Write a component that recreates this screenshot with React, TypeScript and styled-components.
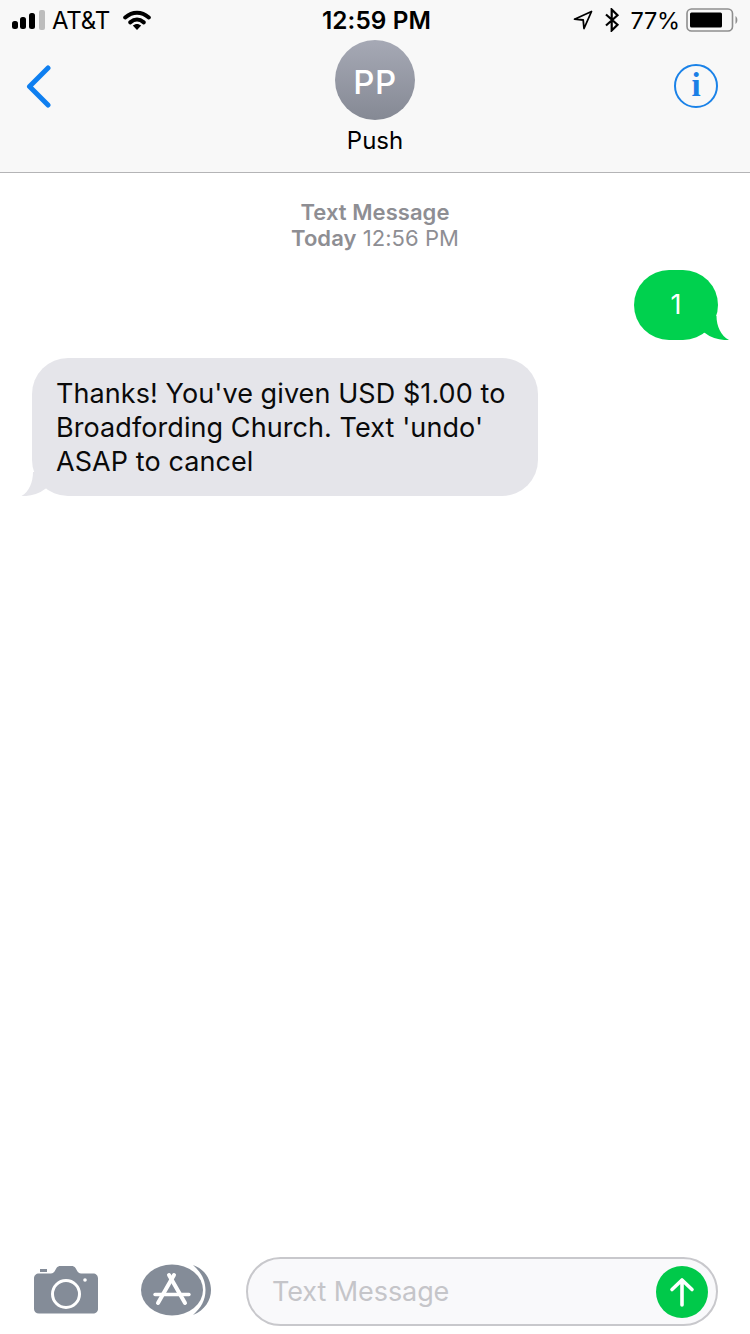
import styled, { createGlobalStyle } from "styled-components";

const GlobalStyle = createGlobalStyle`
    html, body {
        margin: 0;
        padding: 0;
        background: #ffffff;
    }
`;

const Page = styled.div`
    width: 750px;
    height: 1334px;
    display: flex;
    flex-direction: column;
    overflow: hidden;
    background: #ffffff;
    font-family: Inter, "Liberation Sans", sans-serif;
    color: #000000;
`;

const Header = styled.header`
    height: 173px;
    box-sizing: border-box;
    background: #f8f8f8;
    border-bottom: 1px solid #b4b4b6;
    flex: none;
`;

const StatusBar = styled.div`
    height: 40px;
    display: grid;
    grid-template-columns: 1fr auto 1fr;
    align-items: center;
    padding: 0 12px;
`;

const StatusLeft = styled.div`
    display: flex;
    align-items: center;
`;

const Carrier = styled.span`
    font-size: 24px;
    margin-left: 7px;
    margin-right: 13px;
    letter-spacing: -0.2px;
`;

const Clock = styled.span`
    font-size: 24.3px;
    font-weight: 600;
    letter-spacing: 0.1px;
    padding-left: 3px;
`;

const StatusRight = styled.div`
    display: flex;
    align-items: center;
    justify-content: flex-end;
`;

const Battery = styled.span`
    font-size: 23.5px;
    margin: 0 6px 0 10px;
    letter-spacing: -0.2px;
`;

const NavRow = styled.div`
    display: grid;
    grid-template-columns: 1fr auto 1fr;
    align-items: start;
    padding: 0 26px;
`;

const BackButton = styled.div`
    padding-top: 25px;
    display: flex;
`;

const Contact = styled.div`
    display: flex;
    flex-direction: column;
    align-items: center;
`;

const Avatar = styled.div`
    width: 80px;
    height: 80px;
    box-sizing: border-box;
    padding-top: 3px;
    border-radius: 50%;
    background: linear-gradient(#a6a9b5, #858994);
    color: #ffffff;
    font-size: 33px;
    font-weight: 500;
    letter-spacing: 0.5px;
    display: flex;
    align-items: center;
    justify-content: center;
`;

const ContactName = styled.div`
    font-size: 24px;
    line-height: 30px;
    margin-top: 6px;
`;

const InfoWrap = styled.div`
    display: flex;
    justify-content: flex-end;
    padding: 24px 6px 0 0;
`;

const InfoButton = styled.div`
    width: 44px;
    height: 44px;
    box-sizing: border-box;
    border: 2px solid #1a82e8;
    border-radius: 50%;
    color: #1a7fe6;
    font-family: "Liberation Serif", serif;
    font-weight: 700;
    font-size: 33px;
    line-height: 39px;
    text-align: center;
`;

const Thread = styled.main`
    flex: 1;
    display: flex;
    flex-direction: column;
    padding-top: 26px;
`;

const Stamp = styled.div`
    text-align: center;
    font-size: 22px;
    line-height: 26px;
    letter-spacing: 0.05px;
    color: #8e8e93;
`;

const StampStrong = styled.span`
    font-weight: 600;
`;

const Row = styled.div<{ $outgoing?: boolean }>`
    display: flex;
    justify-content: ${(p) => (p.$outgoing ? "flex-end" : "flex-start")};
    padding: ${(p) => (p.$outgoing ? "19px 32px 0 0" : "18px 0 0 32px")};
`;

const Bubble = styled.div<{ $outgoing?: boolean }>`
    position: relative;
    box-sizing: border-box;
    background: ${(p) => (p.$outgoing ? "#00d14e" : "#e5e5ea")};
    color: ${(p) => (p.$outgoing ? "#ffffff" : "#0a0a0a")};
    border-radius: 36px;
    font-size: 27px;
    line-height: 34px;
    letter-spacing: 0.08px;
    padding: ${(p) => (p.$outgoing ? "18px 0" : "19px 33px 17px 24px")};
    min-height: 70px;
    min-width: ${(p) => (p.$outgoing ? "84px" : "0")};
    text-align: ${(p) => (p.$outgoing ? "center" : "left")};
`;

const Tail = styled.svg<{ $outgoing?: boolean }>`
    position: absolute;
    bottom: 0;
    ${(p) => (p.$outgoing ? "right: -11px;" : "left: -11px;")}
`;

const InputBar = styled.footer`
    flex: none;
    height: 88px;
    box-sizing: border-box;
    display: flex;
    align-items: flex-start;
    padding: 9px 32px 0 34px;
`;

const CameraIcon = styled.svg`
    margin-top: 11px;
    flex: none;
`;

const AppsIcon = styled.svg`
    margin: 9px 35px 0 43px;
    flex: none;
`;

const Field = styled.div`
    flex: 1;
    height: 69px;
    margin-top: 2px;
    box-sizing: border-box;
    border: 2px solid #c8c8cc;
    border-radius: 35px;
    background: #f9f9fb;
    display: flex;
    align-items: center;
    justify-content: space-between;
    padding: 0 8px 0 24px;
`;

const Placeholder = styled.span`
    font-size: 27px;
    letter-spacing: -0.08px;
    color: #c5c5c9;
`;

const SendButton = styled.div`
    width: 52px;
    height: 52px;
    border-radius: 50%;
    background: #00c94a;
    display: flex;
    align-items: center;
    justify-content: center;
`;

const App = () => {
    return (
        <Page>
            <GlobalStyle />
            <Header>
                <StatusBar>
                    <StatusLeft>
                        <svg width="33" height="20" viewBox="0 0 33 20">
                            <rect x="0" y="11" width="6" height="8" rx="2.5" fill="#000" />
                            <rect x="8" y="7" width="6" height="12" rx="2.5" fill="#000" />
                            <rect x="17" y="3" width="6" height="16" rx="2.5" fill="#000" />
                            <rect x="27" y="0" width="6" height="20" rx="2" fill="#bdbdbd" />
                        </svg>
                        <Carrier>AT&amp;T</Carrier>
                        <svg width="28" height="20" viewBox="0 0 28 20">
                            <path d="M2.2 7.5C9.5 1.2 18.5 1.2 25.8 7.5" fill="none" stroke="#000" strokeWidth="4" strokeLinecap="round" />
                            <path d="M7.2 12.4C11.5 8.8 16.5 8.8 20.8 12.4" fill="none" stroke="#000" strokeWidth="4" strokeLinecap="round" />
                            <path d="M9.8 15.6C12.4 13.4 15.6 13.4 18.2 15.6L14 20Z" fill="#000" />
                        </svg>
                    </StatusLeft>
                    <Clock>12:59 PM</Clock>
                    <StatusRight>
                        <svg width="20" height="20" viewBox="0 0 20 20">
                            <path d="M18.5 1.5L1.5 9.2L10.2 10L11 18.5Z" fill="none" stroke="#000" strokeWidth="1.8" strokeLinejoin="round" />
                        </svg>
                        <svg width="16" height="24" viewBox="0 0 16 24" style={{ marginLeft: 11 }}>
                            <path d="M2 6.5L13.5 16.8L7.7 22.5V1.5L13.5 7.2L2 17.5" fill="none" stroke="#000" strokeWidth="2.2" />
                        </svg>
                        <Battery>77%</Battery>
                        <svg width="52" height="24" viewBox="0 0 52 24">
                            <rect x="1" y="1" width="45.5" height="22" rx="4.5" fill="none" stroke="#8e8e8e" strokeWidth="1.6" />
                            <rect x="4" y="4.5" width="32" height="15" rx="1.5" fill="#000" />
                            <path d="M49.5 8C52 9.5 52 14.5 49.5 16Z" fill="#8e8e8e" />
                        </svg>
                    </StatusRight>
                </StatusBar>
                <NavRow>
                    <BackButton>
                        <svg width="25" height="43" viewBox="0 0 25 43">
                            <path d="M22 3L3.5 21.5L22 40" fill="none" stroke="#0f7ff0" strokeWidth="5" strokeLinecap="round" strokeLinejoin="round" />
                        </svg>
                    </BackButton>
                    <Contact>
                        <Avatar>PP</Avatar>
                        <ContactName>Push</ContactName>
                    </Contact>
                    <InfoWrap>
                        <InfoButton>i</InfoButton>
                    </InfoWrap>
                </NavRow>
            </Header>
            <Thread>
                <Stamp>
                    <StampStrong>Text Message</StampStrong>
                    <br />
                    <StampStrong>Today</StampStrong> 12:56 PM
                </Stamp>
                <Row $outgoing>
                    <Bubble $outgoing>
                        1
                        <Tail $outgoing width="30" height="24" viewBox="0 0 30 24">
                            <path d="M4 0H17.5C17.5 10 22 20 30 24C22 24.5 13 22.5 6 17L0 14Z" fill="#00d14e" />
                        </Tail>
                    </Bubble>
                </Row>
                <Row>
                    <Bubble>
                        Thanks! You've given USD $1.00 to
                        <br />
                        Broadfording Church. Text 'undo'
                        <br />
                        ASAP to cancel
                        <Tail width="30" height="24" viewBox="0 0 30 24">
                            <path d="M26 0H12C12 10 8 20 0.5 24C8 24.5 17 22.5 24 17L30 14Z" fill="#e5e5ea" />
                        </Tail>
                    </Bubble>
                </Row>
            </Thread>
            <InputBar>
                <CameraIcon width="64" height="48" viewBox="0 0 64 48">
                    <path d="M5 7.5H17C18.5 7.5 19.5 6.8 20.5 5.5L22.5 2C23.5 .6 25 0 26.5 0H37.5C39 0 40.5 .6 41.5 2L43.5 5.5C44.5 6.8 45.5 7.5 47 7.5H59C62 7.5 64 9.5 64 12.5V43C64 45.5 62 47.5 59 47.5H5C2 47.5 0 45.5 0 43V12.5C0 9.5 2 7.5 5 7.5Z" fill="#848c98" />
                    <rect x="6" y="3" width="7" height="3" fill="#848c98" />
                    <circle cx="32" cy="28" r="13.5" fill="none" stroke="#fff" strokeWidth="3" />
                    <circle cx="51" cy="14" r="1.8" fill="#fff" />
                </CameraIcon>
                <AppsIcon width="70" height="52" viewBox="0 0 70 52">
                    <path d="M52 1C66 6 70 18 70 26C70 36 64 46 52 51C60 44 64.5 36 64.5 26C64.5 16 60 8 52 1Z" fill="#848c98" />
                    <ellipse cx="31" cy="26" rx="31" ry="25.5" fill="#848c98" />
                    <path d="M28 11L44 39" fill="none" stroke="#fff" strokeWidth="4" strokeLinecap="round" />
                    <path d="M33 11L17 39" fill="none" stroke="#fff" strokeWidth="4" strokeLinecap="round" />
                    <path d="M14 30.5H48" fill="none" stroke="#fff" strokeWidth="3.4" strokeLinecap="round" />
                </AppsIcon>
                <Field>
                    <Placeholder>Text Message</Placeholder>
                    <SendButton>
                        <svg width="30" height="32" viewBox="0 0 30 32">
                            <path d="M15 29V4M5 13.5L15 4L25 13.5" fill="none" stroke="#fff" strokeWidth="3.6" strokeLinecap="round" strokeLinejoin="round" />
                        </svg>
                    </SendButton>
                </Field>
            </InputBar>
        </Page>
    );
};

export default App;
